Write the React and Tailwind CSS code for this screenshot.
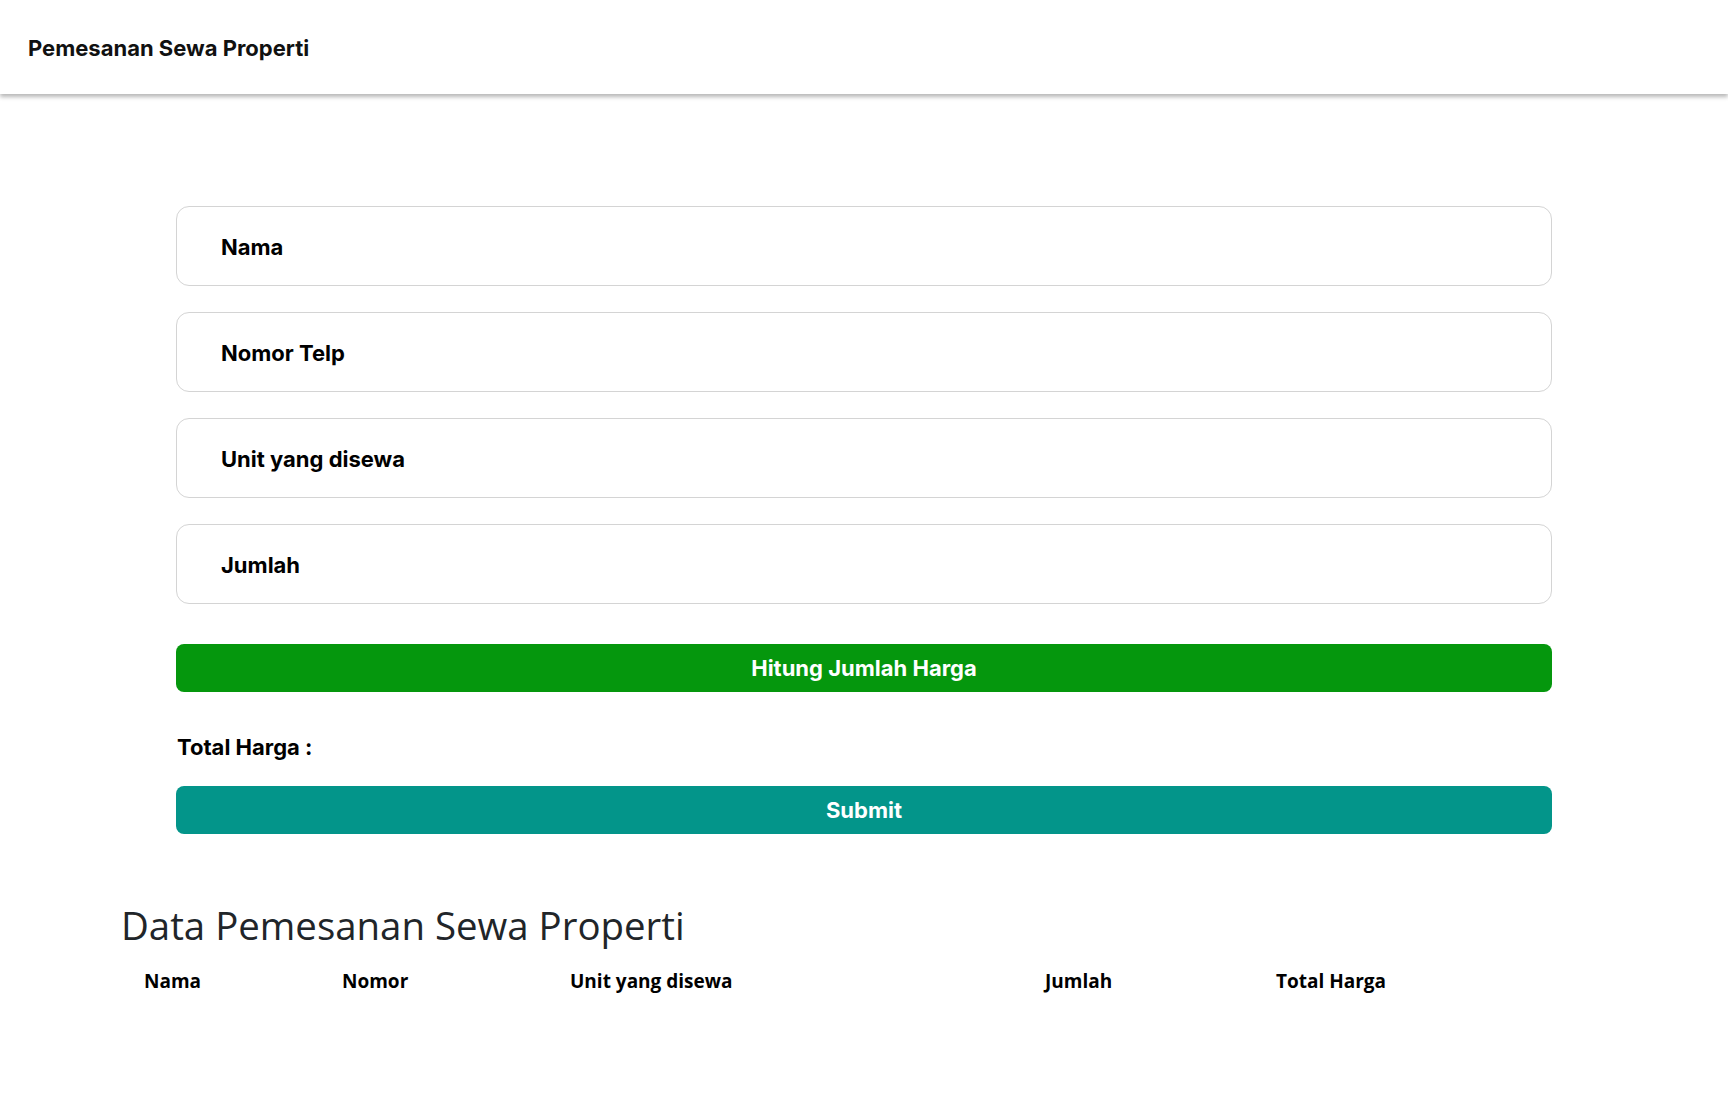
import React from "react";

function Field({ label }) {
  return (
    <div className="h-[80px] rounded-[13px] border border-[#d4d4d4] bg-white flex items-center pl-[44px] pt-[3px] text-[22px] font-bold text-black">
      {label}
    </div>
  );
}

export default function App() {
  return (
    <div className="min-h-[1117px] bg-white">
      <header className="h-[94px] flex items-center pl-[28px] pt-[3px] bg-white shadow-[0_3px_4px_rgba(0,0,0,0.28)] font-[Inter,'Liberation_Sans',sans-serif]">
        <h1 className="text-[22px] font-bold text-[#111]">Pemesanan Sewa Properti</h1>
      </header>

      <main className="pt-[112px] px-[176px] font-[Inter,'Liberation_Sans',sans-serif]">
        <div className="flex flex-col gap-[26px]">
          <Field label="Nama" />
          <Field label="Nomor Telp" />
          <Field label="Unit yang disewa" />
          <Field label="Jumlah" />
        </div>
        <button className="mt-[40px] w-full h-[48px] rounded-[8px] bg-[#05970d] text-white text-[22px] font-bold">
          Hitung Jumlah Harga
        </button>
        <div className="mt-[41px] pl-[1px] text-[22px] font-bold text-black leading-[28px]">Total Harga :</div>
        <button className="mt-[25px] w-full h-[48px] rounded-[8px] bg-[#03958a] text-white text-[22px] font-bold">
          Submit
        </button>
      </main>

      <section className="mt-[63px] ml-[124px] mr-[124px] font-['Open_Sans','Noto_Sans',sans-serif] text-[#212529]">
        <div className="overflow-hidden">
          <h2 className="ml-[-3px] text-[38.4px] leading-[56px] font-medium whitespace-nowrap">
            Data Pemesanan Sewa Properti
          </h2>
        </div>
        <table className="mt-[6px] w-full text-left text-black">
          <thead>
            <tr className="text-[19px] font-bold">
              <th className="w-[218px] pl-[20px] py-[8px] font-bold">Nama</th>
              <th className="w-[228px] py-[8px] font-bold">Nomor</th>
              <th className="w-[475px] py-[8px] font-bold">Unit yang disewa</th>
              <th className="w-[231px] py-[8px] font-bold">Jumlah</th>
              <th className="py-[8px] font-bold">Total Harga</th>
            </tr>
          </thead>
        </table>
      </section>
    </div>
  );
}
